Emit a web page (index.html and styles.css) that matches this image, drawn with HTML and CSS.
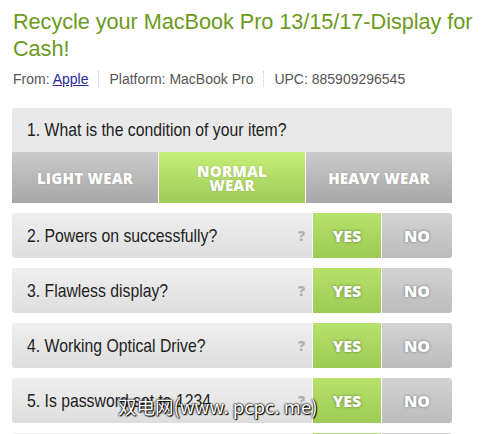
FILE: index.html
```html
<!DOCTYPE html>
<html>
<head>
<meta charset="utf-8">
<link rel="stylesheet" href="styles.css">
</head>
<body>
<div class="page">
  <h1 class="title"><span class="nowrap">Recycle your MacBook Pro 13/15/17-Display for</span><br>Cash!</h1>
  <div class="meta">
    <span class="meta-item">From: <a href="#" class="link">Apple</a></span>
    <span class="meta-item">Platform: MacBook Pro</span>
    <span class="meta-item">UPC: 885909296545</span>
  </div>
  <div class="quiz">
    <div class="q-head"><span class="qtext">1. What is the condition of your item?</span></div>
    <div class="wear">
      <div class="wear-btn">LIGHT WEAR</div>
      <div class="wear-btn active">NORMAL<br>WEAR</div>
      <div class="wear-btn">HEAVY WEAR</div>
    </div>
    <div class="row">
      <div class="label"><span class="qtext">2. Powers on successfully?</span><span class="help">?</span></div>
      <div class="yes">YES</div><div class="no">NO</div>
    </div>
    <div class="row">
      <div class="label"><span class="qtext">3. Flawless display?</span><span class="help">?</span></div>
      <div class="yes">YES</div><div class="no">NO</div>
    </div>
    <div class="row">
      <div class="label"><span class="qtext">4. Working Optical Drive?</span><span class="help">?</span></div>
      <div class="yes">YES</div><div class="no">NO</div>
    </div>
    <div class="row">
      <div class="label"><span class="qtext">5. Is password set to 1234</span><span class="help">?</span></div>
      <div class="yes">YES</div><div class="no">NO</div>
    </div>
    <div class="row">
      <div class="label"><span class="qtext">6. Has original charger?</span><span class="help">?</span></div>
      <div class="yes">YES</div><div class="no">NO</div>
    </div>
  </div>
  <div class="watermark">双电网(www. pcpc. me)</div>
</div>
</body>
</html>
```
FILE: styles.css
```css
html { overflow: hidden; }
body {
  margin: 0;
  background: #fff;
  font-family: "Liberation Sans", Arial, sans-serif;
}
.page {
  position: relative;
  padding: 8px 0 0 12px;
}
.title {
  margin: 0 0 0 1px;
  font-weight: normal;
  font-size: 21.7px;
  line-height: 27px;
  letter-spacing: -0.05px;
  color: #6b9a1c;
  font-family: "Liberation Sans", Arial, sans-serif;
}
.nowrap { white-space: nowrap; }
.meta {
  display: flex;
  margin: 9px 0 0 1px;
  font-size: 14px;
  line-height: 16px;
  color: #555;
}
.meta-item {
  padding: 0 10px;
  border-left: 1px dotted #ccc;
}
.meta-item:first-child { padding-left: 0; border-left: 0; }
.link { color: #2b2a9e; }
.quiz {
  margin-top: 21px;
  width: 440px;
}
.qtext {
  display: inline-block;
  white-space: nowrap;
  font-family: "Liberation Sans", Arial, sans-serif;
  font-size: 19px;
  color: #222;
  transform: scaleX(0.83);
  transform-origin: left center;
}
.q-head {
  height: 44px;
  display: flex;
  align-items: center;
  padding-left: 15px;
  background: #e9e9e9;
  border-radius: 3px 3px 0 0;
}
.wear {
  display: flex;
  height: 51px;
  gap: 1px;
  background: #fff;
}
.wear-btn {
  flex: 1;
  display: flex;
  align-items: center;
  justify-content: center;
  text-align: center;
  font-family: "Open Sans", sans-serif;
  font-weight: 800;
  font-size: 15px;
  line-height: 14px;
  letter-spacing: 0.2px;
  color: #fff;
  text-shadow: 0 0 2px rgba(0,0,0,0.2);
  background: linear-gradient(#cbcbcb, #a7a7a7);
}
.wear-btn.active {
  background: linear-gradient(#c6ef78, #9fc95a);
}
.row {
  display: flex;
  height: 45px;
  margin-top: 10px;
}
.label {
  flex: 1;
  display: flex;
  align-items: center;
  justify-content: space-between;
  padding: 0 7px 0 15px;
  background: linear-gradient(#efefef, #dedede);
  border-radius: 3px 0 0 3px;
}
.help {
  font-family: "Open Sans", sans-serif;
  font-weight: 800;
  font-size: 14px;
  color: #b0b0b0;
}
.yes, .no {
  display: flex;
  align-items: center;
  justify-content: center;
  font-family: "Open Sans", sans-serif;
  font-weight: 800;
  font-size: 16px;
  color: #fff;
  text-shadow: 0 0 3px rgba(0,0,0,0.45);
}
.yes {
  width: 68px;
  margin-left: 1px;
  background: linear-gradient(#b7e16a, #9dcb55);
}
.no {
  width: 70px;
  margin-left: 1px;
  background: linear-gradient(#d3d3d3, #bcbcbc);
  border-radius: 0 3px 3px 0;
}
.watermark {
  position: absolute;
  left: 118px;
  top: 393px;
  font-family: "Noto Sans CJK SC", sans-serif;
  font-size: 18.5px;
  line-height: 26px;
  color: #fff;
  text-shadow: 0 0 2px #000, 0 0 2px #000, 1px 1px 1px #000;
  white-space: nowrap;
}
```
